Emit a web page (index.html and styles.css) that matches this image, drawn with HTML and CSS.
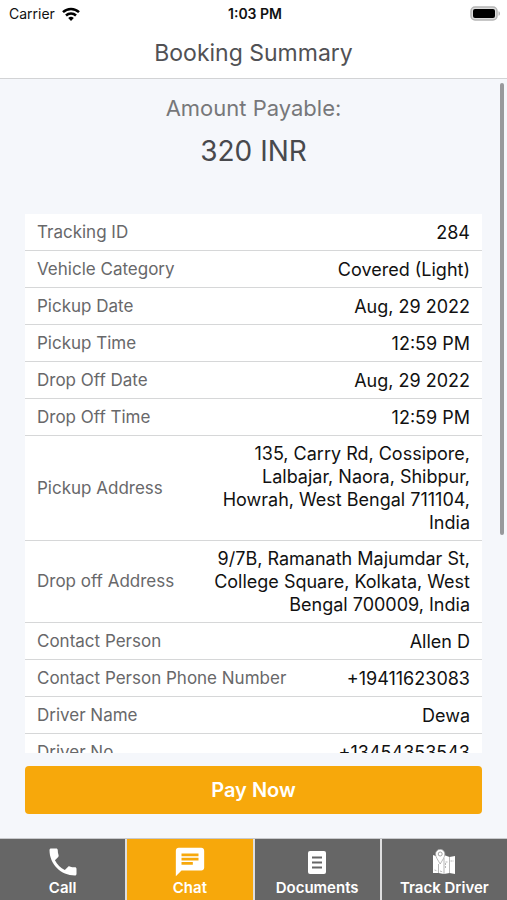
FILE: index.html
```html
<!DOCTYPE html>
<html lang="en">
<head>
    <meta charset="UTF-8">
    <meta name="viewport" content="width=device-width, initial-scale=1.0">
    <title>Booking Summary</title>
    <link rel="stylesheet" href="styles.css">
</head>
<body>
    <div class="status-bar">
        <div class="carrier">
            <span>Carrier</span>
            <svg width="18" height="14" viewBox="0 0 18 14" fill="none" stroke="#000" stroke-width="2.5">
                <path d="M1 5.2a11.4 11.4 0 0 1 16 0"/>
                <path d="M4 8.5a7.2 7.2 0 0 1 10 0"/>
                <path d="M9 14L6.2 11.1a4 4 0 0 1 5.6 0z" fill="#000" stroke="none"/>
            </svg>
        </div>
        <span class="clock">1:03 PM</span>
        <div class="battery">
            <svg width="31" height="15" viewBox="0 0 31 15">
                <rect x="1" y="1" width="26" height="13" rx="4" fill="#ddd" stroke="#b5b5b5" stroke-width="1.5"/>
                <rect x="3" y="3" width="22" height="9" rx="2" fill="#000"/>
                <path d="M28.5 5.2c2 .6 2 4 0 4.6z" fill="#b5b5b5"/>
            </svg>
        </div>
    </div>

    <header class="header">
        <h1>Booking Summary</h1>
    </header>

    <main class="content">
        <div class="scroll-area">
            <section class="amount">
                <h2>Amount Payable:</h2>
                <p>320 INR</p>
            </section>

            <table class="details">
                <tbody>
                    <tr><th scope="row">Tracking ID</th><td>284</td></tr>
                    <tr><th scope="row">Vehicle Category</th><td>Covered (Light)</td></tr>
                    <tr><th scope="row">Pickup Date</th><td>Aug, 29 2022</td></tr>
                    <tr><th scope="row">Pickup Time</th><td>12:59 PM</td></tr>
                    <tr><th scope="row">Drop Off Date</th><td>Aug, 29 2022</td></tr>
                    <tr><th scope="row">Drop Off Time</th><td>12:59 PM</td></tr>
                    <tr><th scope="row">Pickup Address</th><td>135, Carry Rd, Cossipore, Lalbajar, Naora, Shibpur, Howrah, West Bengal 711104, India</td></tr>
                    <tr><th scope="row">Drop off Address</th><td>9/7B, Ramanath Majumdar St, College Square, Kolkata, West Bengal 700009, India</td></tr>
                    <tr><th scope="row">Contact Person</th><td>Allen D</td></tr>
                    <tr><th scope="row">Contact Person Phone Number</th><td>+19411623083</td></tr>
                    <tr><th scope="row">Driver Name</th><td>Dewa</td></tr>
                    <tr><th scope="row">Driver No</th><td>+13454353543</td></tr>
                </tbody>
            </table>
        </div>
        <div class="scroll-thumb"></div>
    </main>

    <div class="pay">
        <button type="button" class="pay-button">Pay Now</button>
    </div>

    <nav class="tabs">
        <a href="#call" class="tab">
            <svg width="36" height="36" viewBox="0 0 24 24" fill="#fff">
                <path d="M6.62 10.79c1.44 2.83 3.76 5.14 6.59 6.59l2.2-2.2c.27-.27.67-.36 1.02-.24 1.12.37 2.33.57 3.57.57.55 0 1 .45 1 1V20c0 .55-.45 1-1 1-9.39 0-17-7.61-17-17 0-.55.45-1 1-1h3.5c.55 0 1 .45 1 1 0 1.25.2 2.45.57 3.57.11.35.03.74-.25 1.02l-2.2 2.2z"/>
            </svg>
            <span>Call</span>
        </a>
        <a href="#chat" class="tab active">
            <svg width="34" height="34" viewBox="0 0 24 24" fill="#fff">
                <path d="M20 2H4c-1.1 0-1.99.9-1.99 2L2 22l4-4h14c1.1 0 2-.9 2-2V4c0-1.1-.9-2-2-2zM6 9h12v2H6V9zm8 5H6v-2h8v2zm4-6H6V6h12v2z"/>
            </svg>
            <span>Chat</span>
        </a>
        <a href="#documents" class="tab">
            <svg width="18" height="23" viewBox="0 0 18 23">
                <rect width="18" height="23" rx="2" fill="#fff"/>
                <path d="M4 6.5h10M4 11.5h10M4 16.5h10" stroke="#666" stroke-width="1.8"/>
            </svg>
            <span>Documents</span>
        </a>
        <a href="#track" class="tab">
            <svg width="22" height="26" viewBox="0 0 22 26">
                <path d="M0 6l5.500 2L11 6l5.500 2L22 7v18l-5.500-1-5.500 1-5.500-1L0 24z" fill="#fff"/>
                <path d="M5.500 15v9M11 9v16M16.500 8v16" fill="none" stroke="#999" stroke-width=".7"/>
                <path d="M1.500 21l3 1M7 22l3 1M12.500 19v-6h3M17.500 12h3.500" fill="none" stroke="#999" stroke-width=".7" stroke-dasharray="2 1"/>
                <path d="M7.200 15C5 11 2.500 8 2.500 5a4.700 4.700 0 0 1 9.400 0c0 3-2.500 6-4.700 10z" fill="#fff" stroke="#999" stroke-width=".7"/>
                <circle cx="7.200" cy="5" r="2" fill="#fff" stroke="#888" stroke-width=".8"/>
            </svg>
            <span>Track Driver</span>
        </a>
    </nav>
</body>
</html>
```

FILE: styles.css
```css
* {
    box-sizing: border-box;
}

body {
    margin: 0;
    height: 100vh;
    display: flex;
    flex-direction: column;
    background-color: #f5f7fb;
    color: #111;
    font-family: Inter, "Liberation Sans", sans-serif;
}

.status-bar {
    display: grid;
    grid-template-columns: 1fr auto 1fr;
    align-items: center;
    height: 27px;
    padding: 0 6px 0 9px;
    background: white;
    font-size: 14px;
}

.carrier {
    display: flex;
    align-items: center;
    gap: 7px;
}

.clock {
    font-weight: 600;
}

.battery {
    display: flex;
    justify-content: flex-end;
}

.header {
    height: 52px;
    background: white;
    border-bottom: 1px solid #d2d3d5;
    text-align: center;
}

h1 {
    margin: 0;
    font-size: 23px;
    font-weight: 400;
    line-height: 53px;
    color: #515154;
}

.content {
    position: relative;
    flex: 1;
    min-height: 0;
}

.scroll-area {
    height: 100%;
    padding: 0 25px;
    overflow-y: auto;
    scrollbar-width: none;
}

/* scroll position marker, sits over the content */
.scroll-thumb {
    position: absolute;
    top: 4px;
    right: 3px;
    width: 4px;
    height: 67%;
    border-radius: 2px;
    background: #98999c;
}

.amount {
    padding: 14px 0 45px;
    text-align: center;
}

.amount h2 {
    margin: 0;
    font-size: 22px;
    font-weight: 400;
    line-height: 30px;
    color: #77777a;
}

.amount p {
    margin: 10px 0 0;
    font-size: 28px;
    line-height: 36px;
    color: #48494d;
}

.details,
.details tbody {
    display: block;
}

.details {
    background: white;
}

.details tr {
    display: flex;
    align-items: center;
    justify-content: space-between;
    min-height: 37px;
    padding: 6px 12px;
    border-bottom: 1px solid #d6d7d8;
    line-height: 23px;
}

.details th {
    padding: 0;
    font-size: 17px;
    font-weight: 400;
    text-align: left;
    color: #68686a;
}

.details td {
    max-width: 65%;
    padding: 0;
    font-size: 18px;
    text-align: right;
}

.pay {
    padding: 13px 25px 24px;
}

.pay-button {
    display: block;
    width: 100%;
    height: 48px;
    border: none;
    border-radius: 4px;
    background-color: #f7a80b;
    color: white;
    font-family: inherit;
    font-size: 20px;
    font-weight: 600;
    cursor: pointer;
}

.tabs {
    display: grid;
    grid-template-columns: repeat(4, 1fr);
    gap: 2px;
    height: 62px;
    border-top: 1px solid #c8c9cc;
    background: #dededf;
}

.tab {
    display: grid;
    grid-template-rows: 36px 16px;
    justify-items: center;
    align-items: center;
    align-content: center;
    padding-top: 1px;
    background-color: #666;
    color: white;
    font-size: 15px;
    font-weight: 600;
    line-height: 16px;
    text-decoration: none;
    white-space: nowrap;
}

.tab.active {
    background-color: #f7a80b;
}
```
